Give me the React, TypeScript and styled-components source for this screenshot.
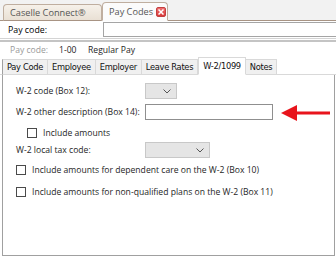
import React from "react";
import styled, { createGlobalStyle } from "styled-components";

const GlobalStyle = createGlobalStyle`
  html, body {
    margin: 0;
    padding: 0;
    background: #ffffff;
  }
  body {
    font-family: "Open Sans", "Noto Sans", sans-serif;
    font-size: 8.6px;
    color: #1e1e1e;
  }
`;

const Frame = styled.div`
  position: relative;
  width: 336px;
  height: 257px;
  background: #ffffff;
  display: flex;
  flex-direction: column;
  overflow: hidden;
`;

const DocStrip = styled.div`
  height: 21px;
  flex-shrink: 0;
  background: #f2f2f2;
  border-bottom: 1px solid #a89484;
  display: flex;
  align-items: flex-end;
  padding-left: 3px;
  box-sizing: border-box;
`;

const DocTab = styled.div<{ active?: boolean; w: number }>`
  width: ${(p) => p.w}px;
  height: ${(p) => (p.active ? "19px" : "17px")};
  box-sizing: border-box;
  display: flex;
  align-items: center;
  justify-content: space-between;
  padding: 0 1px 0 6px;
  margin-bottom: -1px;
  border: 1px solid #bfae9f;
  border-bottom: ${(p) => (p.active ? "1px solid #fbfbfb" : "1px solid #a89484")};
  border-radius: 4px 4px 0 0;
  background: ${(p) =>
    p.active ? "#fbfbfb" : "linear-gradient(#f6f1ea, #e9e0d4)"};
  color: #555555;
  font-size: 9.2px;
  white-space: nowrap;
`;

const CloseBox = styled.span`
  width: 10px;
  height: 10px;
  border-radius: 2px;
  background: linear-gradient(#f07070, #d83a3a);
  border: 1px solid #c24040;
  box-sizing: border-box;
  display: flex;
  align-items: center;
  justify-content: center;
`;

const SearchRow = styled.div`
  height: 17px;
  flex-shrink: 0;
  display: flex;
  align-items: center;
  padding-left: 8px;
  font-size: 8.8px;
  color: #000000;
`;

const SearchLabel = styled.span`
  width: 95px;
`;

const SearchInput = styled.div`
  flex: 1;
  height: 15px;
  border: 1px solid #a5a5a5;
  border-right: none;
  box-sizing: border-box;
`;

const Rule = styled.div`
  height: 1px;
  flex-shrink: 0;
  border-top: 1px solid #d4d4d4;
  border-bottom: 2px solid #c4c4c4;
`;

const InfoRow = styled.div`
  height: 16px;
  flex-shrink: 0;
  display: flex;
  align-items: center;
  padding-left: 10px;
`;

const InfoCell = styled.span<{ muted?: boolean; w?: number }>`
  color: ${(p) => (p.muted ? "#9a9a9a" : "#1e1e1e")};
  width: ${(p) => (p.w ? `${p.w}px` : "auto")};
`;

const TabBar = styled.div`
  display: flex;
  flex-shrink: 0;
  align-items: flex-end;
  height: 17px;
  padding-left: 2px;
  border-bottom: 1px solid #d9d9d9;
  box-sizing: border-box;
`;

const PageTab = styled.div<{ active?: boolean }>`
  height: ${(p) => (p.active ? "18px" : "16px")};
  box-sizing: border-box;
  padding: 0 4px;
  margin-bottom: -1px;
  display: flex;
  align-items: center;
  border: 1px solid #d9d9d9;
  border-left-width: ${(p) => (p.active ? "1px" : "0")};
  border-bottom-color: ${(p) => (p.active ? "#ffffff" : "#d9d9d9")};
  background: ${(p) => (p.active ? "#ffffff" : "#f0f0f0")};
  font-family: "DejaVu Sans", sans-serif;
  font-size: 8.3px;
  letter-spacing: -0.3px;
  color: #111111;

  &:first-child {
    border-left-width: 1px;
    border-left-color: #a0a0a0;
  }
`;

const Panel = styled.div`
  flex: 1;
  margin: 0 1px 1px 2px;
  border-left: 1px solid #a0a0a0;
  border-right: 1px solid #a0a0a0;
  border-bottom: 1px solid #a0a0a0;
  display: flex;
  flex-direction: column;
  padding: 8px 0 0 13px;
`;

const FieldRow = styled.div<{ indent?: number; space?: number }>`
  display: flex;
  align-items: center;
  height: 16px;
  margin-top: ${(p) => p.space ?? 0}px;
  padding-left: ${(p) => p.indent ?? 0}px;
  white-space: nowrap;
`;

const FieldLabel = styled.span`
  width: 129px;
`;

const Select = styled.div<{ w: number }>`
  width: ${(p) => p.w}px;
  height: 16px;
  box-sizing: border-box;
  border: 1px solid #c8c8c8;
  background: #e5e5e5;
  display: flex;
  align-items: center;
  justify-content: flex-end;
  padding-right: 5px;
`;

const TextBox = styled.div<{ w: number }>`
  width: ${(p) => p.w}px;
  height: 16px;
  box-sizing: border-box;
  border: 1px solid #8f8f8f;
  background: #ffffff;
`;

const Check = styled.span`
  width: 10px;
  height: 10px;
  box-sizing: border-box;
  border: 1px solid #4a4a4a;
  background: #ffffff;
  margin-right: 6px;
`;

const Arrow = styled.svg`
  position: absolute;
  left: 281px;
  top: 104px;
`;

const Chevron = () => (
  <svg width="8" height="5" viewBox="0 0 8 5">
    <path d="M0.5 0.5 L4 4 L7.5 0.5" fill="none" stroke="#555" strokeWidth="1" />
  </svg>
);

const tabs = ["Pay Code", "Employee", "Employer", "Leave Rates", "W-2/1099", "Notes"];

export default function App() {
  return (
    <Frame>
      <GlobalStyle />
      <DocStrip>
        <DocTab w={99}>Caselle Connect®</DocTab>
        <DocTab active w={66}>
          Pay Codes
          <CloseBox>
            <svg width="6" height="6" viewBox="0 0 6 6">
              <path d="M0.5 0.5 L5.5 5.5 M5.5 0.5 L0.5 5.5" stroke="#fff" strokeWidth="1.5" />
            </svg>
          </CloseBox>
        </DocTab>
      </DocStrip>
      <SearchRow>
        <SearchLabel>Pay code:</SearchLabel>
        <SearchInput />
      </SearchRow>
      <Rule />
      <InfoRow>
        <InfoCell muted w={49}>Pay code:</InfoCell>
        <InfoCell w={29}>1-00</InfoCell>
        <InfoCell>Regular Pay</InfoCell>
      </InfoRow>
      <TabBar>
        {tabs.map((t) => (
          <PageTab key={t} active={t === "W-2/1099"}>
            {t}
          </PageTab>
        ))}
      </TabBar>
      <Panel>
        <FieldRow>
          <FieldLabel>W-2 code (Box 12):</FieldLabel>
          <Select w={32}>
            <Chevron />
          </Select>
        </FieldRow>
        <FieldRow space={5}>
          <FieldLabel>W-2 other description (Box 14):</FieldLabel>
          <TextBox w={128} />
        </FieldRow>
        <FieldRow indent={11} space={5}>
          <Check />
          Include amounts
        </FieldRow>
        <FieldRow space={1}>
          <FieldLabel>W-2 local tax code:</FieldLabel>
          <Select w={65}>
            <Chevron />
          </Select>
        </FieldRow>
        <FieldRow space={4}>
          <Check />
          Include amounts for dependent care on the W-2 (Box 10)
        </FieldRow>
        <FieldRow space={6}>
          <Check />
          Include amounts for non-qualified plans on the W-2 (Box 11)
        </FieldRow>
      </Panel>
      <Arrow width="50" height="18" viewBox="0 0 50 18">
        <path d="M13 9 H49" stroke="#e8141c" strokeWidth="3" />
        <polygon points="0,9 16,1 16,17" fill="#e8141c" />
      </Arrow>
    </Frame>
  );
}
